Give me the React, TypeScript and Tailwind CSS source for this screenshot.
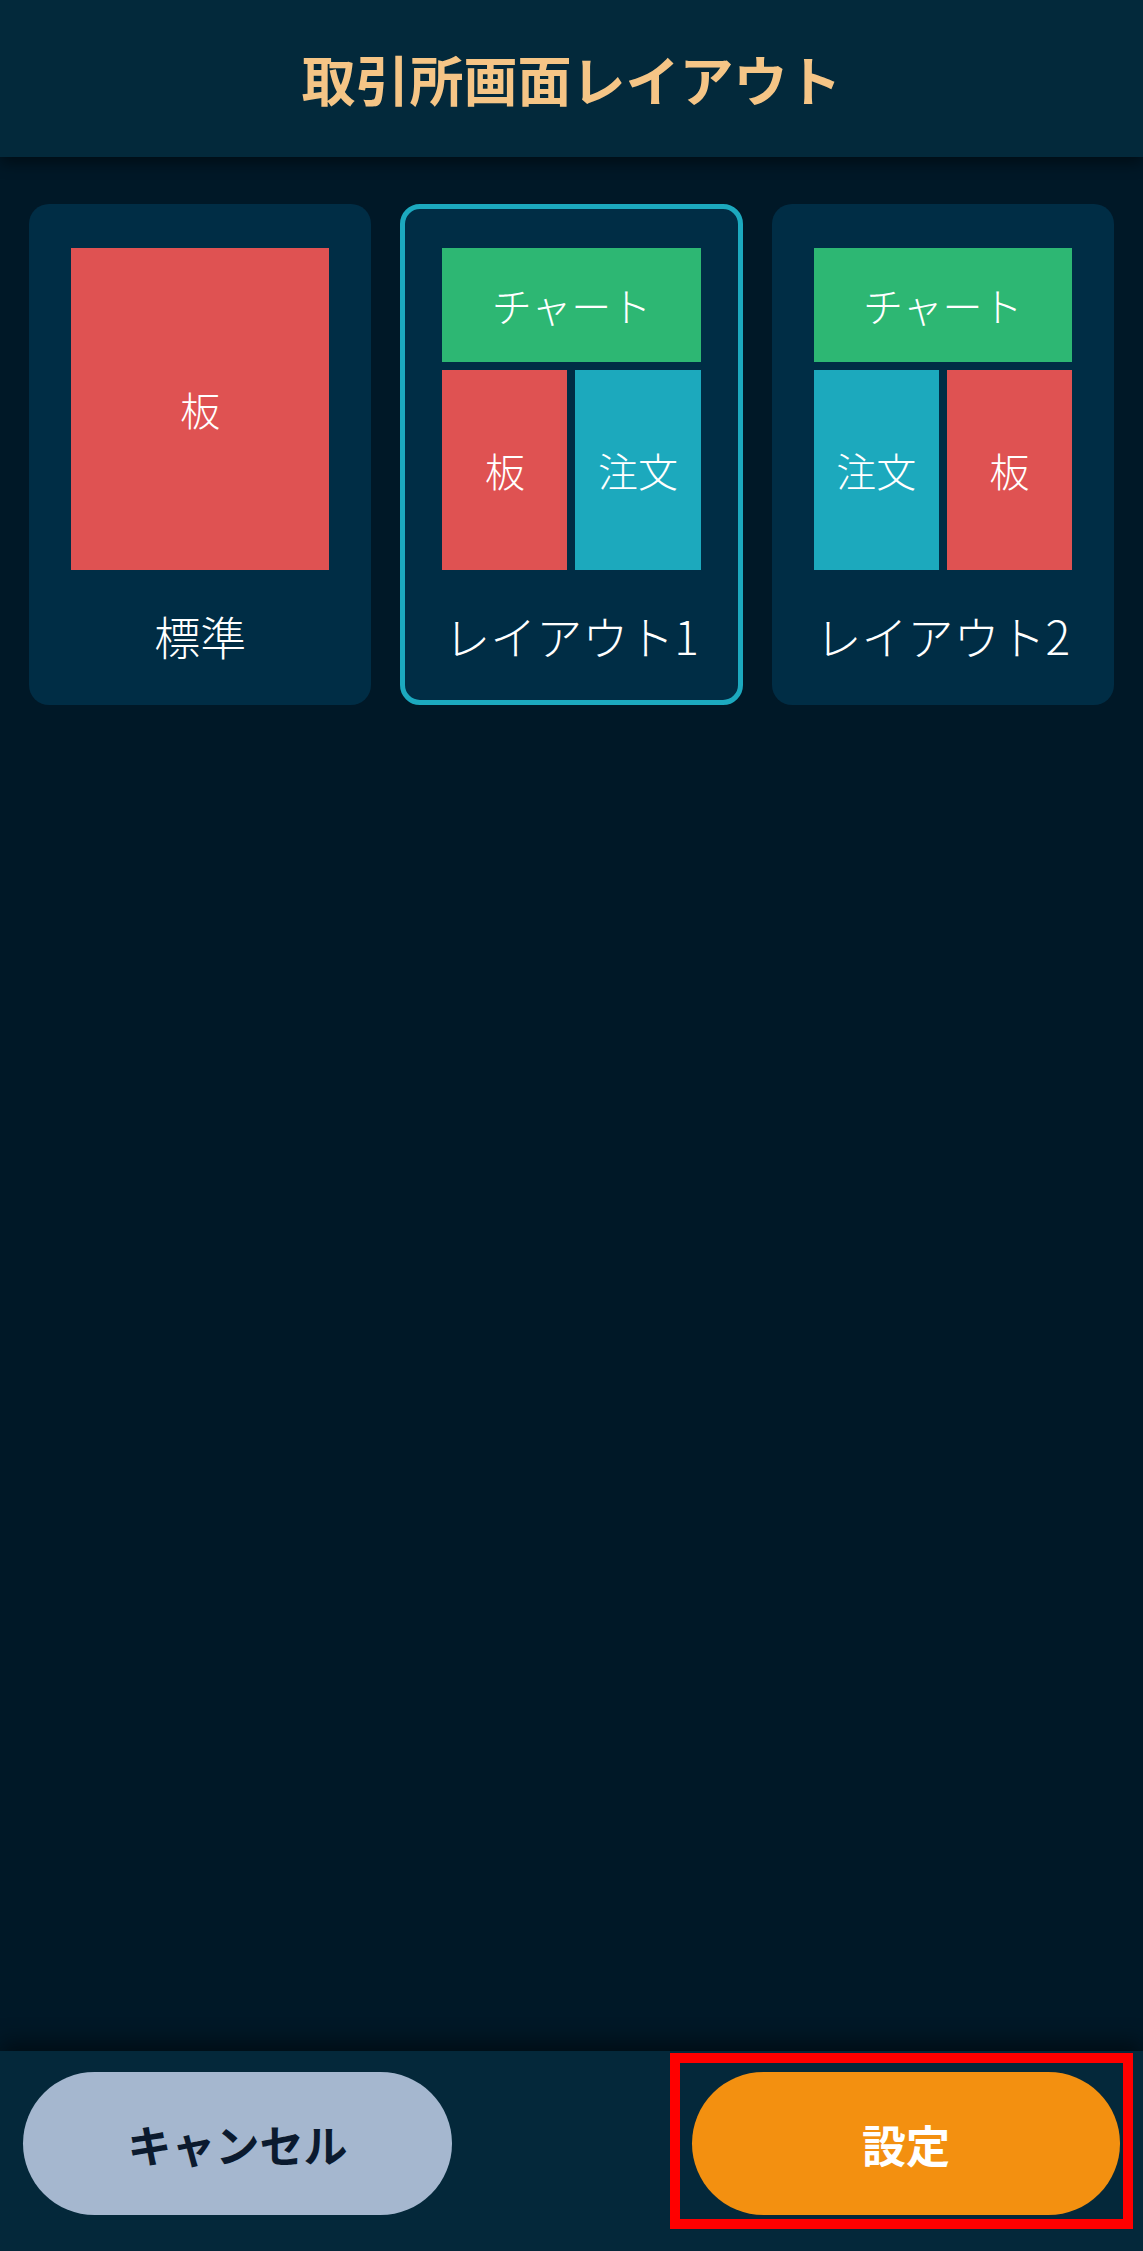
import React from "react";

const font = { fontFamily: '"Noto Sans CJK JP", "Noto Sans", sans-serif' };

function Box({ color, label, className = "" }: { color: string; label: string; className?: string }) {
  return (
    <div className={`flex items-center justify-center text-[40px] font-light leading-none text-white ${color} ${className}`}>
      {label}
    </div>
  );
}

function Card({ selected, label, children }: { selected?: boolean; label: string; children: React.ReactNode }) {
  return (
    <div
      className={`flex h-[501px] flex-col rounded-[20px] border-[5px] bg-[#002d45] px-[37px] pt-[39px] ${
        selected ? "border-[#1ca9bf]" : "border-transparent"
      }`}
    >
      <div className="h-[322px]">{children}</div>
      <div className="flex flex-1 items-center justify-center text-[46px] font-light leading-none text-white">{label}</div>
    </div>
  );
}

export default function App() {
  return (
    <div style={font} className="flex h-[2251px] w-full flex-col bg-[#001827]">
      <header className="relative z-10 flex h-[157px] shrink-0 items-center justify-center bg-[#03293b] shadow-[0_6px_14px_rgba(0,0,0,0.45)]">
        <h1 className="text-[54px] font-bold leading-none text-[#f5c586]">取引所画面レイアウト</h1>
      </header>
      <main className="flex-1 px-[29px] pt-[47px]">
        <div className="grid grid-cols-3 gap-[29px]">
          <Card label="標準">
            <Box color="bg-[#df5252]" label="板" className="h-full" />
          </Card>
          <Card selected label="レイアウト1">
            <div className="flex h-full flex-col gap-[8px]">
              <Box color="bg-[#2db773]" label="チャート" className="h-[114px]" />
              <div className="grid flex-1 grid-cols-2 gap-[8px]">
                <Box color="bg-[#df5252]" label="板" />
                <Box color="bg-[#1ca9bd]" label="注文" />
              </div>
            </div>
          </Card>
          <Card label="レイアウト2">
            <div className="flex h-full flex-col gap-[8px]">
              <Box color="bg-[#2db773]" label="チャート" className="h-[114px]" />
              <div className="grid flex-1 grid-cols-2 gap-[8px]">
                <Box color="bg-[#1ca9bd]" label="注文" />
                <Box color="bg-[#df5252]" label="板" />
              </div>
            </div>
          </Card>
        </div>
      </main>
      <footer className="relative h-[200px] shrink-0 bg-[#04283a] shadow-[0_-10px_20px_rgba(0,0,0,0.45)]">
        <div className="flex justify-between px-[23px] pt-[21px]">
          <button className="flex h-[143px] w-[429px] items-center justify-center rounded-full bg-[#a5b7cf] text-[44px] font-bold leading-none text-[#0b1a2e]">
            キャンセル
          </button>
          <button className="flex h-[143px] w-[428px] items-center justify-center rounded-full bg-[#f39010] text-[44px] font-bold leading-none text-white">
            設定
          </button>
        </div>
        <div className="pointer-events-none absolute left-[670px] top-[2px] h-[176px] w-[463px] border-[10px] border-[#ff0000]" />
      </footer>
    </div>
  );
}
